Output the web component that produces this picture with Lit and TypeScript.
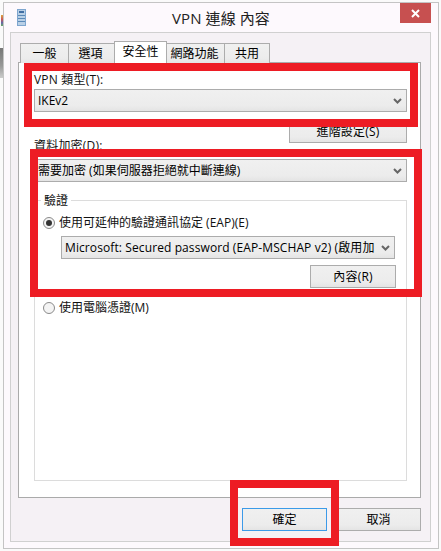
import { LitElement, html, css } from "lit";
import { customElement } from "lit/decorators.js";

const chevron = html`<svg class="chev" width="9" height="6" viewBox="0 0 9 6"><path d="M1 1l3.5 3.5L8 1" fill="none" stroke="#666" stroke-width="2"/></svg>`;

@customElement("app-root")
export class AppRoot extends LitElement {
  static styles = css`
    :host { display: block; width: 441px; height: 551px; background: #fafafa; position: relative; overflow: hidden;
      font-family: "Open Sans", "Noto Sans CJK TC", sans-serif; font-size: 12px; color: #111; line-height: 16px; }
    * { box-sizing: border-box; }
    .back { position: absolute; left: 0; top: 48px; width: 3px; height: 30px; background: linear-gradient(#777, #999 60%, #ccc); }
    .dots { position: absolute; left: 1px; top: 15px; width: 2px; height: 11px; background: linear-gradient(#d9a441, #c55 40%, #66a 70%, #6a6); }
    .window { position: absolute; left: 3px; top: 2px; width: 436px; height: 547px; background: #fdf9fd; border: 1px solid #c4c4c4; display: flex; flex-direction: column; }
    .titlebar { height: 29px; flex: none; display: flex; align-items: center; justify-content: center; position: relative; font-size: 15px; color: #222; letter-spacing: .1px; }
    .ticon { position: absolute; left: 13px; top: 6px; }
    .close { position: absolute; left: 396px; top: 0; width: 31px; height: 20px; background: #c75050; display: flex; align-items: center; justify-content: center; }
    .panel { margin: 0 7px 0 6px; flex: none; height: 510px; background: #f5f1f5; border: 1px solid #d0d0d0; padding: 9px 9px 0 7px; display: flex; flex-direction: column; }
    .tabs { display: flex; height: 21px; padding-left: 2px; align-items: flex-end; flex: none; position: relative; z-index: 1; margin-bottom: -1px; }
    .tab { height: 20px; border: 1px solid #acacac; border-bottom: none; background: linear-gradient(#f0f0f0, #ececec 75%, #e4e4e4); text-align: center; line-height: 19px; margin-right: -1px; color: #000; }
    .tab.on { height: 22px; background: #fff; line-height: 20px; position: relative; z-index: 1; }
    .w1 { width: 49px; } .w2 { width: 47px; padding-right: 2px; } .w3 { width: 53px; } .w4 { width: 59px; padding-right: 2px; } .w5 { width: 46px; }
    .pane { height: 436px; flex: none; background: #fff; border: 1px solid #aaa; padding: 8px 13px 0 15px; }
    .label { height: 18px; line-height: 18px; letter-spacing: .2px; }
    .label2 { margin-top: -6px; }
    .sel { height: 23px; border: 1px solid #acacac; background: linear-gradient(#f0f0f0, #ececec 75%, #e4e4e4); display: flex; align-items: center; justify-content: space-between; padding: 0 4px 0 3px; color: #000; }
    .sel2 { margin-top: 4px; }
    .btn { height: 23px; border: 1px solid #acacac; background: linear-gradient(#f0f0f0, #ececec 75%, #e4e4e4); text-align: center; line-height: 21px; color: #000; letter-spacing: .2px; }
    .adv { width: 118px; margin-left: auto; margin-top: 8px; }
    .group { position: relative; height: 281px; margin-top: 18px; border: 1px solid #dcdcdc; padding: 13px 10px 0 8px; }
    .legend { position: absolute; left: 6px; top: -8px; background: #fff; padding: 0 3px; }
    .radio { display: flex; align-items: center; gap: 4px; height: 18px; }
    .dot { width: 12px; height: 12px; flex: none; border-radius: 50%; border: 1px solid #8a8a8a; background: #f4f4f4; display: flex; align-items: center; justify-content: center; }
    .dot i { width: 6px; height: 6px; border-radius: 50%; background: #333; display: block; }
    .sel3 { margin: 4px 0 0 18px; width: 334px; white-space: nowrap; }
    .sel3 span { letter-spacing: .1px; }
    .btn3 { width: 86px; margin: 6px 0 0 auto; }
    .r2 { margin-top: 11px; }
    .footer { display: flex; flex: none; margin-top: 10px; padding-left: 224px; gap: 9px; }
    .footer .btn { width: 86px; letter-spacing: 0; }
    .footer .btn.def { border: 1px solid #3c9ae8; }
    .frame { position: absolute; border: 8px solid #ed1c24; pointer-events: none; z-index: 2; }
    .f1 { left: 24px; top: 63px; width: 394px; height: 64px; }
    .f2 { left: 30px; top: 149px; width: 392px; height: 148px; }
    .f3 { left: 230px; top: 480px; width: 109px; height: 66px; }
  `;

  render() {
    return html`
      <div class="back"></div>
      <div class="dots"></div>
      <div class="window">
        <div class="titlebar">
          <svg class="ticon" width="9" height="17" viewBox="0 0 9 17">
            <rect width="9" height="17" fill="#7ea6cf"/><rect x="1" y="1" width="7" height="15" fill="#b9d0e6"/>
            <rect x="2" y="2" width="5" height="2" fill="#3f6ea3"/>
            <path d="M1 6.5h7M1 9.5h7M1 12.5h7" stroke="#5b8ab8" stroke-width="1"/>
          </svg>
          VPN 連線 內容
          <div class="close"><svg width="9" height="9" viewBox="0 0 9 9"><path d="M1 1l7 7M8 1l-7 7" stroke="#fff" stroke-width="2"/></svg></div>
        </div>
        <div class="panel">
          <div class="tabs">
            <div class="tab w1">一般</div>
            <div class="tab w2">選項</div>
            <div class="tab on w3">安全性</div>
            <div class="tab w4">網路功能</div>
            <div class="tab w5">共用</div>
          </div>
          <div class="pane">
            <div class="label">VPN 類型(T):</div>
            <div class="sel"><span>IKEv2</span>${chevron}</div>
            <div class="btn adv">進階設定(S)</div>
            <div class="label label2">資料加密(D):</div>
            <div class="sel sel2"><span>需要加密 (如果伺服器拒絕就中斷連線)</span>${chevron}</div>
            <div class="group">
              <div class="legend">驗證</div>
              <div class="radio"><span class="dot"><i></i></span>使用可延伸的驗證通訊協定 (EAP)(E)</div>
              <div class="sel sel3"><span>Microsoft: Secured password (EAP-MSCHAP v2) (啟用加</span>${chevron}</div>
              <div class="btn btn3">內容(R)</div>
              <div class="radio r2"><span class="dot"></span>使用電腦憑證(M)</div>
            </div>
          </div>
          <div class="footer">
            <div class="btn def">確定</div>
            <div class="btn">取消</div>
          </div>
        </div>
      </div>
      <div class="frame f1"></div>
      <div class="frame f2"></div>
      <div class="frame f3"></div>
    `;
  }
}
